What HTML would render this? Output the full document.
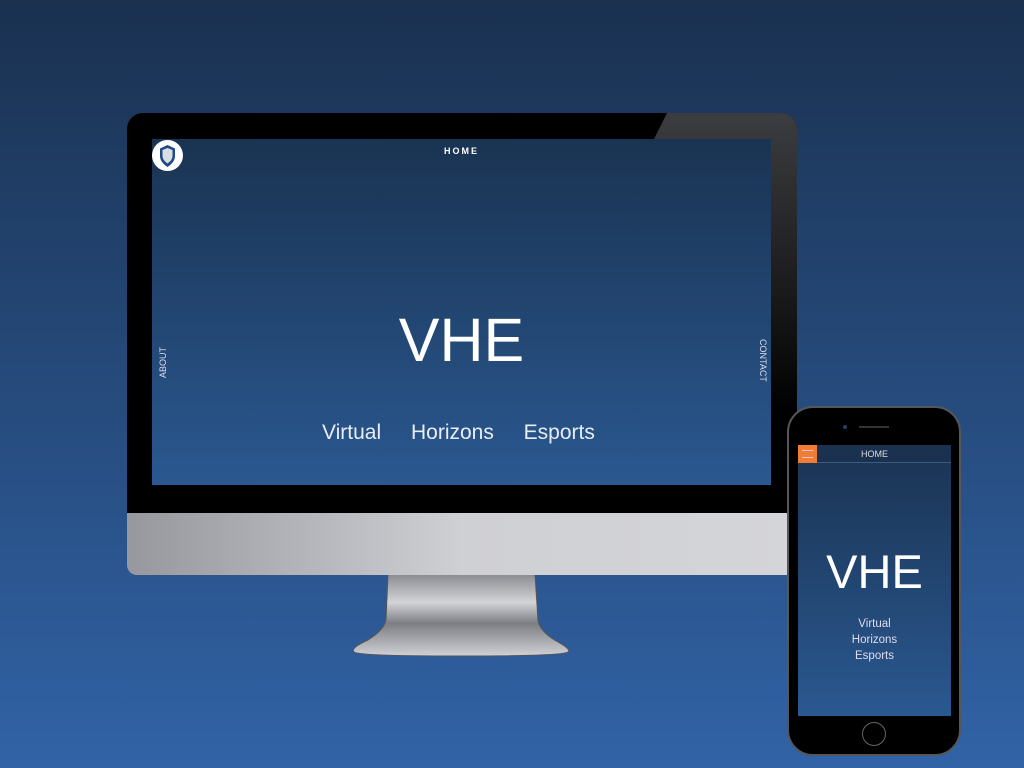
<!DOCTYPE html>
<html><head><style>
*{margin:0;padding:0;box-sizing:border-box}
body{width:1024px;height:768px;overflow:hidden;position:relative;background:linear-gradient(#1a3150,#3163a6);font-family:"Liberation Sans",sans-serif}
.a{position:absolute}
.scr{background:linear-gradient(#1a3352,#2a5890);color:#fff}
</style></head><body>
<!-- stand -->
<svg class="a" style="left:340px;top:570px" width="250" height="90">
<defs><linearGradient id="st" x1="0" y1="0" x2="0" y2="1"><stop offset="0" stop-color="#8a8b90"/><stop offset=".35" stop-color="#d3d4d8"/><stop offset=".6" stop-color="#7d7e83"/><stop offset="1" stop-color="#d0d1d6"/></linearGradient></defs>
<path d="M48 4 L195 4 L198 50 Q200 62 218 72 Q232 80 228 82 Q222 86 120 86 Q18 86 14 82 Q10 78 28 70 Q44 60 46 50 Z" fill="url(#st)" stroke="#555" stroke-width="1"/>
</svg>
<!-- chin -->
<div class="a" style="left:127px;top:513px;width:670px;height:62px;border-radius:0 0 10px 10px;background:linear-gradient(90deg,#97989d,#b8b9be 30%,#cfd0d4 50%,#d4d5d9)"></div>
<!-- bezel -->
<div class="a" style="left:127px;top:113px;width:670px;height:400px;background:#000;border-radius:16px 16px 0 0;overflow:hidden">
<div class="a" style="left:525px;top:0;width:145px;height:400px;background:linear-gradient(180deg,#3c3d40,#1a1a1b 45%,#000 75%);clip-path:polygon(15px 0,145px 0,145px 400px,110px 400px,0 30px)"></div>
</div>
<div class="a scr" style="left:152px;top:139px;width:619px;height:346px">
<div class="a" style="left:0;top:1px;width:31px;height:31px;border-radius:50%;background:#fff">
<svg width="31" height="31"><path d="M15.5 5 L23 8.5 L23 16 Q23 22 15.5 27 Q8 22 8 16 L8 8.5 Z" fill="#1f4a86"/><path d="M15.5 8 L20.5 10 L20.5 16 Q20.5 20 15.5 23.5 Q10.5 20 10.5 16 L10.5 10 Z" fill="#d8dde6"/></svg></div>
<div class="a" style="left:292px;top:7px;font-size:9px;font-weight:bold;letter-spacing:2px">HOME</div>
<div class="a" style="left:0;width:619px;top:166px;text-align:center;font-size:61px;line-height:70px">VHE</div>
<div class="a" style="left:170px;top:282px;font-size:21px;word-spacing:24px;color:#e8edf4">Virtual Horizons Esports</div>
<div class="a" style="left:6px;top:239px;font-size:9px;transform:rotate(-90deg);transform-origin:0 0;color:#dde">ABOUT</div>
<div class="a" style="left:616px;top:200px;font-size:9px;transform:rotate(90deg);transform-origin:0 0;color:#dde">CONTACT</div>
</div>
<!-- phone -->
<div class="a" style="left:787px;top:406px;width:174px;height:350px;border-radius:26px;background:#000;border:2px solid #55575c"></div>
<div class="a" style="left:843px;top:425px;width:4px;height:4px;border-radius:50%;background:#23406a"></div>
<div class="a" style="left:859px;top:426px;width:30px;height:2px;background:#333"></div>
<div class="a" style="left:862px;top:722px;width:24px;height:24px;border-radius:50%;border:1.5px solid #666"></div>
<div class="a scr" style="left:798px;top:445px;width:153px;height:271px">
<div class="a" style="left:0;top:0;width:153px;height:18px;background:#1a3150;border-bottom:1px solid #3c5a80"></div>
<div class="a" style="left:0;top:0;width:19px;height:18px;background:#ef7d32"><div style="margin:5px 4px;height:8px;border-top:1px solid #fbd;border-bottom:1px solid #fbd"></div></div>
<div class="a" style="left:0;width:153px;top:4px;text-align:center;font-size:9px;color:#ddd">HOME</div>
<div class="a" style="left:0;width:153px;top:98px;text-align:center;font-size:47px;line-height:58px">VHE</div>
<div class="a" style="left:0;width:153px;top:171px;text-align:center;font-size:11.5px;line-height:16px;color:#dde">Virtual<br>Horizons<br>Esports</div>
</div>
</body></html>
